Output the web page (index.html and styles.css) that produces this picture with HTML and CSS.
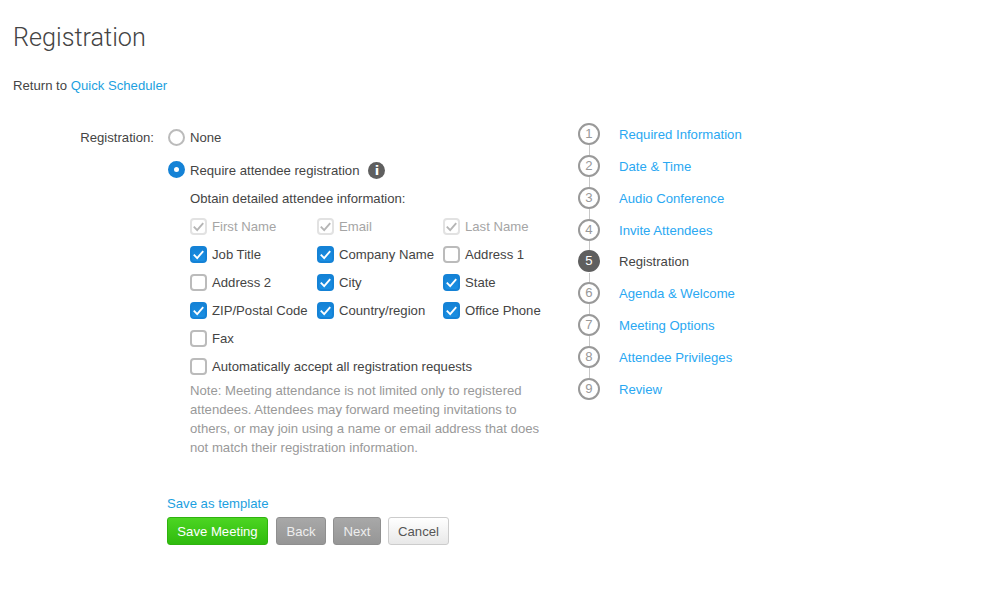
FILE: index.html
```html
<!DOCTYPE html>
<html lang="en">
<head>
    <meta charset="UTF-8">
    <meta name="viewport" content="width=device-width, initial-scale=1.0">
    <title>Registration</title>
    <link rel="stylesheet" href="styles.css">
</head>
<body>
    <svg class="defs" width="0" height="0">
        <symbol id="tick" viewBox="0 0 18 18">
            <path d="M4 9.2 L7.6 12.8 L14 5.4" fill="none" stroke="currentColor" stroke-width="2"/>
        </symbol>
    </svg>

    <h1>Registration</h1>
    <p class="return">Return to <a href="#">Quick Scheduler</a></p>

    <div class="main">
        <div class="form">
            <div class="form-label">Registration:</div>
            <div class="form-body">
                <div class="radio-row">
                    <span class="radio"></span>None
                </div>
                <div class="radio-row second">
                    <span class="radio on"></span>Require attendee registration
                    <span class="info">i</span>
                </div>
                <div class="details">
                    <div class="obtain">Obtain detailed attendee information:</div>
                    <div class="fields">
                        <div class="field off"><span class="box"><svg><use href="#tick"/></svg></span>First Name</div>
                        <div class="field off"><span class="box"><svg><use href="#tick"/></svg></span>Email</div>
                        <div class="field off"><span class="box"><svg><use href="#tick"/></svg></span>Last Name</div>
                        <div class="field"><span class="box on"><svg><use href="#tick"/></svg></span>Job Title</div>
                        <div class="field"><span class="box on"><svg><use href="#tick"/></svg></span>Company Name</div>
                        <div class="field"><span class="box"></span>Address 1</div>
                        <div class="field"><span class="box"></span>Address 2</div>
                        <div class="field"><span class="box on"><svg><use href="#tick"/></svg></span>City</div>
                        <div class="field"><span class="box on"><svg><use href="#tick"/></svg></span>State</div>
                        <div class="field"><span class="box on"><svg><use href="#tick"/></svg></span>ZIP/Postal Code</div>
                        <div class="field"><span class="box on"><svg><use href="#tick"/></svg></span>Country/region</div>
                        <div class="field"><span class="box on"><svg><use href="#tick"/></svg></span>Office Phone</div>
                        <div class="field"><span class="box"></span>Fax</div>
                    </div>
                    <div class="field"><span class="box"></span>Automatically accept all registration requests</div>
                    <p class="note">Note: Meeting attendance is not limited only to registered attendees. Attendees may forward meeting invitations to others, or may join using a name or email address that does not match their registration information.</p>
                </div>
                <a class="template" href="#">Save as template</a>
                <div class="buttons">
                    <button class="btn save">Save Meeting</button>
                    <button class="btn grey back">Back</button>
                    <button class="btn grey next">Next</button>
                    <button class="btn cancel">Cancel</button>
                </div>
            </div>
        </div>

        <ol class="steps">
            <li class="step"><span class="num">1</span><a href="#">Required Information</a></li>
            <li class="step"><span class="num">2</span><a href="#">Date &amp; Time</a></li>
            <li class="step"><span class="num">3</span><a href="#">Audio Conference</a></li>
            <li class="step"><span class="num">4</span><a href="#">Invite Attendees</a></li>
            <li class="step current"><span class="num">5</span><span>Registration</span></li>
            <li class="step"><span class="num">6</span><a href="#">Agenda &amp; Welcome</a></li>
            <li class="step"><span class="num">7</span><a href="#">Meeting Options</a></li>
            <li class="step"><span class="num">8</span><a href="#">Attendee Privileges</a></li>
            <li class="step"><span class="num">9</span><a href="#">Review</a></li>
        </ol>
    </div>
</body>
</html>
```

FILE: styles.css
```css
body {
    margin: 0;
    padding: 0 0 0 13px;
    background-color: #fff;
    color: #444;
    font-family: "Liberation Sans", Arial, sans-serif;
    font-size: 13.15px;
    line-height: 20px;
}
a {
    color: #1c9fe0;
    text-decoration: none;
}
.defs {
    position: absolute;
}
h1 {
    margin: 0;
    padding-top: 22px;
    font-family: Roboto, sans-serif;
    font-size: 25.2px;
    font-weight: 300;
    line-height: 32px;
    color: #444;
}
.return {
    margin: 22px 0 0;
}
.main {
    display: flex;
    margin-top: 30px;
}
.form {
    display: flex;
    width: 565px;
}
.form-label {
    width: 141px;
    padding-top: 2px;
    text-align: right;
    flex: none;
}
.form-body {
    margin-left: 14px;
    flex: 1;
}
.radio-row {
    display: flex;
    align-items: center;
    box-sizing: border-box;
    height: 22px;
    padding-top: 2px;
}
.radio-row.second {
    margin-top: 11px;
}
.radio {
    width: 13px;
    height: 13px;
    margin: 1px 5px 2px 0;
    border: 2px solid #bbb;
    border-radius: 50%;
    background: #fff;
    flex: none;
    box-sizing: content-box;
}
.radio.on {
    width: 5px;
    height: 5px;
    margin: 0 5px 3px 0;
    border: 6px solid #1482d6;
}
.info {
    width: 17px;
    height: 17px;
    margin: 0 0 2px 9px;
    border-radius: 50%;
    background-color: #5f5f5f;
    color: #fff;
    font-family: "DejaVu Sans", sans-serif;
    font-size: 13px;
    font-weight: bold;
    line-height: 17px;
    text-align: center;
}
.details {
    margin-left: 22px;
    width: 355px;
}
.obtain {
    margin-top: 8px;
}
.fields {
    display: grid;
    grid-template-columns: 127px 126px 1fr;
    margin-top: 3px;
}
.field {
    display: flex;
    align-items: center;
    box-sizing: border-box;
    height: 28px;
    padding-top: 2px;
    white-space: nowrap;
}
.field.off {
    color: #a5a5a5;
}
.box {
    display: block;
    width: 13px;
    height: 13px;
    margin: 1px 5px 2px 0;
    border: 2px solid #bbb;
    border-radius: 4px;
    background: #fff;
    color: #fff;
    flex: none;
    position: relative;
}
.box svg {
    display: block;
    width: 17px;
    height: 17px;
    margin: -2px;
}
.box.on {
    border-color: #1482d6;
    background: linear-gradient(#1482d6, #1a8fe3);
}
.field.off .box {
    border-color: #e2e2e2;
    color: #b5b5b5;
}
.note {
    margin: 1px 0 0;
    color: #999;
    line-height: 19px;
}
.template {
    display: block;
    margin: 37px 0 0 -1px;
}
.buttons {
    display: flex;
    margin: 3px 0 0 -1px;
}
.btn {
    height: 28px;
    padding: 0;
    border-radius: 3px;
    font-family: inherit;
    font-size: 13.15px;
}
.save {
    width: 101px;
    border: 1px solid #2fb30f;
    background: linear-gradient(#4cd522, #2fbb0e);
    color: #fff;
}
.grey {
    border: 1px solid #8f8f8f;
    background: linear-gradient(#a8a8a8, #969696);
    color: #eee;
}
.back {
    width: 50px;
    margin-left: 8px;
}
.next {
    width: 48px;
    margin-left: 7px;
}
.cancel {
    width: 61px;
    margin-left: 7px;
    border: 1px solid #ccc;
    background: linear-gradient(#fff, #e8e8e8);
    color: #555;
}
.steps {
    list-style: none;
    margin: -8px 0 0;
    padding: 0;
}
.step {
    display: flex;
    align-items: center;
    box-sizing: border-box;
    height: 31.875px;
    padding-top: 2px;
    position: relative;
}
.step a {
    color: #2aa8f2;
}
.step:not(:last-child)::after {
    content: "";
    position: absolute;
    left: 11px;
    top: 27px;
    width: 1px;
    height: 10px;
    background-color: #c8c8c8;
}
.num {
    width: 18px;
    height: 18px;
    margin: 0 19px 2px 0;
    border: 2px solid #999;
    border-radius: 50%;
    color: #999;
    line-height: 18px;
    text-align: center;
    flex: none;
}
.step.current .num {
    border-color: #5f5f5f;
    background-color: #5f5f5f;
    color: #fff;
}
```
